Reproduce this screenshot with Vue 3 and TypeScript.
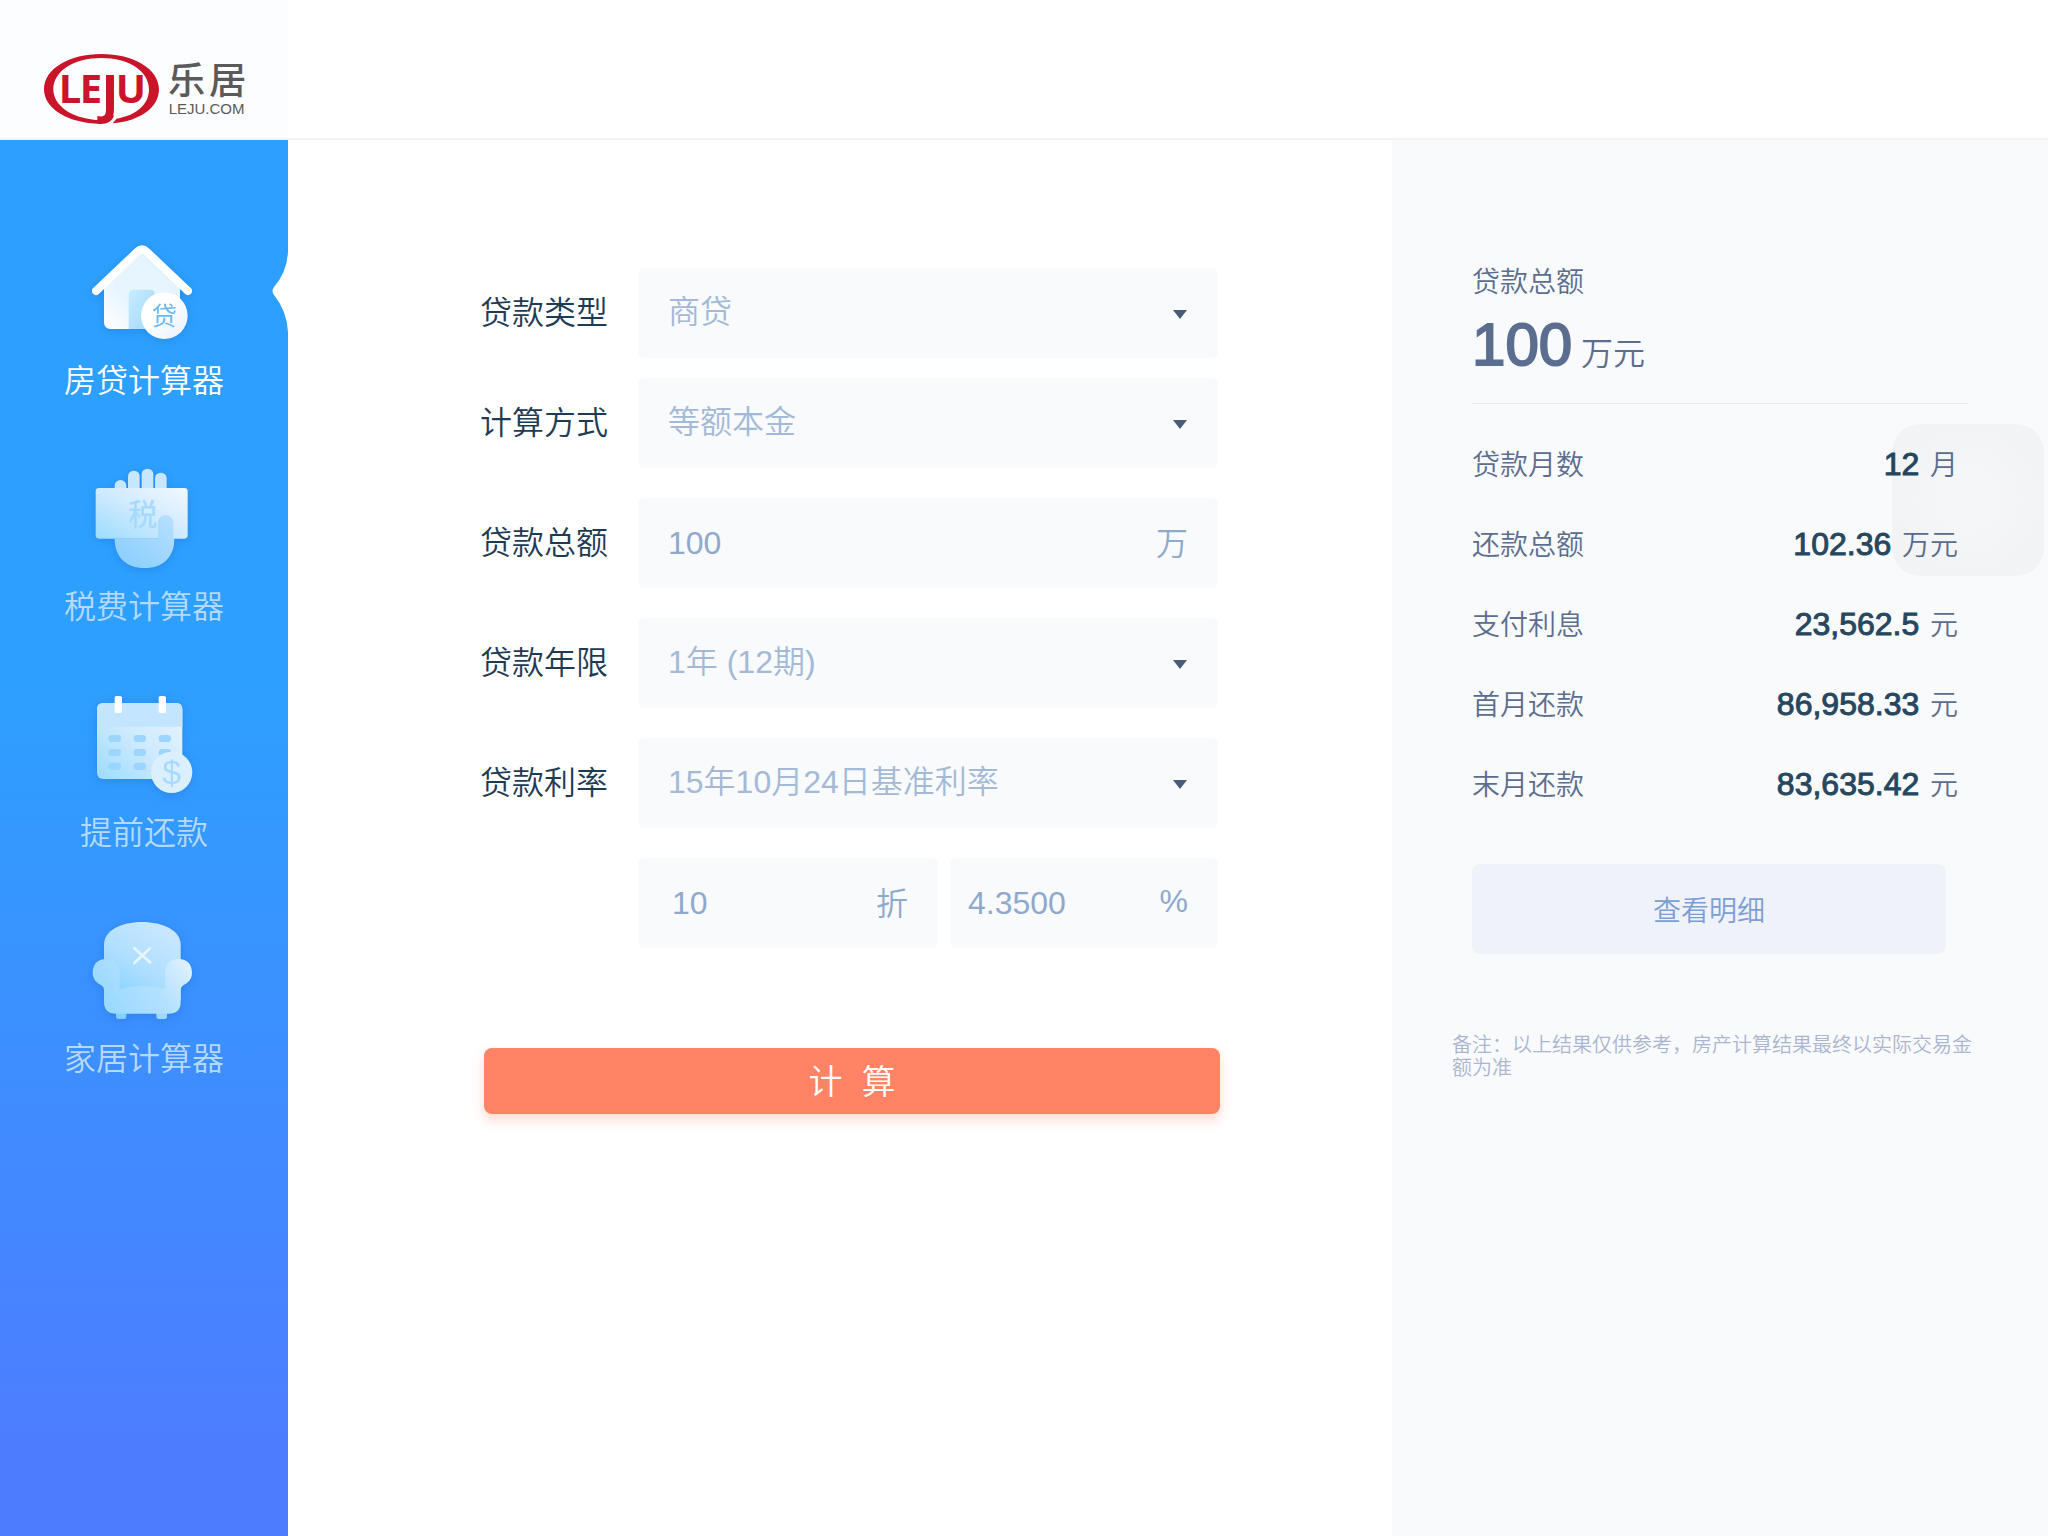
<script setup lang="ts">
import { computed, ref } from 'vue'

interface NavItem {
  id: string
  label: string
}

interface ResultRow {
  label: string
  value: string
  unit: string
}

const navItems: NavItem[] = [
  { id: 'mortgage', label: '房贷计算器' },
  { id: 'tax', label: '税费计算器' },
  { id: 'prepay', label: '提前还款' },
  { id: 'home', label: '家居计算器' },
]
const active = ref('mortgage')

const loanType = ref('商贷')
const method = ref('等额本金')
const total = ref('100')
const years = ref('1年 (12期)')
const baseRate = ref('15年10月24日基准利率')
const discount = ref('10')
const rate = ref('4.3500')

const results = ref<ResultRow[]>([
  { label: '贷款月数', value: '12', unit: '月' },
  { label: '还款总额', value: '102.36', unit: '万元' },
  { label: '支付利息', value: '23,562.5', unit: '元' },
  { label: '首月还款', value: '86,958.33', unit: '元' },
  { label: '末月还款', value: '83,635.42', unit: '元' },
])

const format = (n: number): string =>
  n.toLocaleString('en-US', { maximumFractionDigits: 2 })

const monthlyRate = computed(() => (Number(rate.value) / 1200) * (Number(discount.value) / 10))

function calculate(): void {
  const months = 12
  const principal = Number(total.value) * 10000
  const part = principal / months
  const interest = (principal * monthlyRate.value * (months + 1)) / 2
  const values = [
    String(months),
    format((principal + interest) / 10000),
    format(interest),
    format(part + principal * monthlyRate.value),
    format(part + part * monthlyRate.value),
  ]
  results.value = results.value.map((row, i) => ({ ...row, value: values[i] }))
}
</script>

<template>
  <div class="page">
    <header class="header">
      <a class="brand" href="#" aria-label="乐居">
        <svg class="logo" viewBox="126 66 612 222" aria-hidden="true">
          <path
            fill="#c91429"
            fill-rule="evenodd"
            d="M304 72C400 72 477 116 477 178C477 232 420 274 338 280L350 266C408 257 447 224 447 178C447 123 386 84 304 84C222 84 160 123 160 178C160 226 212 263 286 270C302 271 312 270 318 264L342 256C338 274 320 283 300 282C204 279 132 237 132 178C132 116 208 72 304 72Z"
          />
          <text class="logo-mark" x="176 239" y="220">LE<tspan class="logo-tall" x="304" y="247">J</tspan><tspan x="347" y="220">U</tspan></text>
          <text class="logo-cn" x="504 627" y="192">乐居</text>
          <text class="logo-en" x="506" y="252">LEJU.COM</text>
        </svg>
      </a>
    </header>

    <div class="body">
      <nav class="sidebar">
        <svg class="defs" aria-hidden="true">
          <defs>
            <linearGradient id="wall" x1="0" y1="1" x2="1" y2="0">
              <stop offset="0" stop-color="#fff" />
              <stop offset=".35" stop-color="#e8f5ff" />
              <stop offset=".7" stop-color="#e6f5ff" />
              <stop offset="1" stop-color="#d4ecff" />
            </linearGradient>
            <linearGradient id="door" x1="0" y1="0" x2="1" y2="1">
              <stop offset="0" stop-color="#c9ecff" />
              <stop offset="1" stop-color="#9fd8ff" />
            </linearGradient>
            <linearGradient id="coin" x1="0" y1="0" x2="1" y2="1">
              <stop offset=".4" stop-color="#fff" />
              <stop offset="1" stop-color="#e3f1ff" />
            </linearGradient>
            <linearGradient id="note" x1="0" y1="1" x2="1" y2="0">
              <stop offset="0" stop-color="#9adcff" />
              <stop offset=".5" stop-color="#cfeaff" />
              <stop offset="1" stop-color="#f2f8ff" />
            </linearGradient>
            <linearGradient id="palm" x1="0" y1="1" x2="1" y2="0">
              <stop offset="0" stop-color="#86ccff" />
              <stop offset="1" stop-color="#b8e0ff" />
            </linearGradient>
            <linearGradient id="sheet" x1="0" y1="1" x2="1" y2="0">
              <stop offset="0" stop-color="#9bdcff" />
              <stop offset=".5" stop-color="#cfeaff" />
              <stop offset="1" stop-color="#eaf5ff" />
            </linearGradient>
            <linearGradient id="chair" x1="0" y1="1" x2=".6" y2="0">
              <stop offset="0" stop-color="#79d0ff" />
              <stop offset=".5" stop-color="#addeff" />
              <stop offset="1" stop-color="#c8e7ff" />
            </linearGradient>
            <linearGradient id="arms" x1="0" y1=".4" x2="1" y2="0">
              <stop offset="0" stop-color="#9bdaff" />
              <stop offset=".5" stop-color="#b4e0ff" />
              <stop offset="1" stop-color="#e4f3ff" />
            </linearGradient>
          </defs>
        </svg>
        <ul class="nav-list">
          <li v-for="item in navItems" :key="item.id" class="nav-item">
            <button
              type="button"
              class="nav-button"
              :class="{ active: item.id === active }"
              @click="active = item.id"
            >
              <svg v-if="item.id === 'mortgage'" class="icon" viewBox="102 36 360 360" aria-hidden="true">
                <path fill="url(#wall)" d="M276 96L390 200V327H182Q162 327 162 307V200Z" />
                <path fill="url(#door)" d="M236 327V224Q236 209 251 209H299Q314 209 314 224V327Z" />
                <path
                  fill="none"
                  stroke="#fff"
                  stroke-width="24"
                  stroke-linecap="round"
                  stroke-linejoin="round"
                  d="M138 213L262 95Q276 82 290 95L414 213"
                />
                <circle cx="343" cy="287" r="70" fill="url(#coin)" />
                <text x="343" y="316" font-size="76" fill="#6db9f5" text-anchor="middle" class="glyph">贷</text>
              </svg>
              <svg v-else-if="item.id === 'tax'" class="icon" viewBox="102 24 360 360" aria-hidden="true">
                <g fill="#c7e6ff">
                  <rect x="194" y="90" width="35" height="60" rx="17" />
                  <rect x="234" y="62" width="35" height="80" rx="17" />
                  <rect x="275" y="56" width="35" height="80" rx="17" />
                  <rect x="315" y="68" width="35" height="80" rx="17" />
                </g>
                <rect x="137" y="114" width="276" height="152" rx="10" fill="url(#note)" />
                <text x="279" y="226" font-size="88" fill="#a5dbff" text-anchor="middle" class="glyph strong">税</text>
                <path
                  fill="url(#palm)"
                  d="M194 266H324V218A23 23 0 0 1 370 218V266H373C373 320 340 354 284 354S194 320 194 266Z"
                />
              </svg>
              <svg v-else-if="item.id === 'prepay'" class="icon" viewBox="102 12 360 360" aria-hidden="true">
                <rect x="141" y="69" width="256" height="228" rx="18" fill="url(#sheet)" />
                <path fill="#c3e5ff" d="M141 140V87Q141 69 159 69H379Q397 69 397 87V140Z" />
                <rect x="194" y="48" width="22" height="51" rx="5" fill="#fff" />
                <rect x="326" y="48" width="22" height="51" rx="5" fill="#fff" />
                <g fill="#9cd6ff">
                  <rect x="175" y="165" width="38" height="21" rx="10" />
                  <rect x="251" y="165" width="37" height="21" rx="10" />
                  <rect x="326" y="165" width="37" height="21" rx="10" />
                  <rect x="175" y="207" width="38" height="21" rx="10" />
                  <rect x="251" y="207" width="37" height="21" rx="10" />
                  <rect x="326" y="207" width="37" height="21" rx="10" />
                  <rect x="175" y="248" width="38" height="22" rx="10" />
                  <rect x="251" y="248" width="37" height="22" rx="10" />
                </g>
                <circle cx="365" cy="277" r="62" fill="#dcefff" />
                <text x="365" y="311" font-size="102" fill="#a5dbff" text-anchor="middle" class="latin">$</text>
              </svg>
              <svg v-else class="icon" viewBox="102 30 360 360" aria-hidden="true">
                <rect x="198" y="330" width="31" height="27" rx="7" fill="#7fd0ff" />
                <rect x="319" y="330" width="32" height="27" rx="7" fill="#9cd8ff" />
                <path fill="url(#chair)" d="M162 134C162 92 212 66 276 66S392 92 392 134V300H162Z" />
                <path
                  fill="url(#arms)"
                  d="M168 177C194 177 209 194 209 218V268Q276 248 345 268V218C345 194 360 177 386 177C412 177 426 194 426 218C426 238 414 248 398 257Q392 261 392 270V305Q392 341 356 341H198Q162 341 162 305V270Q162 261 156 257C140 248 128 238 128 218C128 194 142 177 168 177Z"
                />
                <path stroke="#e8f5ff" stroke-width="8" stroke-linecap="round" d="M253 145L300 187M300 145L253 189" />
              </svg>
              <span class="nav-label">{{ item.label }}</span>
            </button>
            <svg v-if="item.id === active" class="notch" viewBox="0 0 16 80" aria-hidden="true">
              <path fill="#fff" d="M16 0Q15 20 2 35Q-1 39 2 43Q15 59 16 80Z" />
            </svg>
          </li>
        </ul>
      </nav>

      <main class="main">
        <form class="form" @submit.prevent="calculate">
          <div class="row tight">
            <label for="loan-type">贷款类型</label>
            <div class="field">
              <select id="loan-type" v-model="loanType">
                <option>商贷</option>
                <option>公积金贷</option>
              </select>
              <span class="caret"></span>
            </div>
          </div>
          <div class="row">
            <label for="method">计算方式</label>
            <div class="field">
              <select id="method" v-model="method">
                <option>等额本金</option>
                <option>等额本息</option>
              </select>
              <span class="caret"></span>
            </div>
          </div>
          <div class="row">
            <label for="total">贷款总额</label>
            <div class="field">
              <input id="total" v-model="total" type="text" inputmode="decimal" />
              <span class="unit">万</span>
            </div>
          </div>
          <div class="row">
            <label for="years">贷款年限</label>
            <div class="field">
              <select id="years" v-model="years">
                <option>1年 (12期)</option>
              </select>
              <span class="caret"></span>
            </div>
          </div>
          <div class="row">
            <label for="base-rate">贷款利率</label>
            <div class="field">
              <select id="base-rate" v-model="baseRate">
                <option>15年10月24日基准利率</option>
              </select>
              <span class="caret"></span>
            </div>
          </div>
          <div class="row split">
            <div class="field">
              <input v-model="discount" class="discount" type="text" inputmode="decimal" aria-label="折扣" />
              <span class="unit">折</span>
            </div>
            <div class="field">
              <input v-model="rate" class="rate" type="text" inputmode="decimal" aria-label="利率" />
              <span class="unit">%</span>
            </div>
          </div>
          <button type="submit" class="submit">计&nbsp;&nbsp;算</button>
        </form>
      </main>

      <aside class="panel">
        <section class="summary">
          <h2 class="summary-title">贷款总额</h2>
          <p class="amount"><strong>100</strong> <span>万元</span></p>
          <dl class="results">
            <div v-for="row in results" :key="row.label" class="result">
              <dt>{{ row.label }}</dt>
              <dd><strong>{{ row.value }}</strong> {{ row.unit }}</dd>
            </div>
          </dl>
          <button type="button" class="detail">查看明细</button>
        </section>
        <p class="remark">备注：以上结果仅供参考，房产计算结果最终以实际交易金额为准</p>
        <div class="float-pad"></div>
      </aside>
    </div>
  </div>
</template>

<style>
body {
  margin: 0;
}
</style>

<style scoped>
.page {
  display: flex;
  flex-direction: column;
  min-height: 100vh;
  background: #fff;
  font-family: "Liberation Sans", "Noto Sans CJK SC", sans-serif;
  font-weight: 350;
}

.header {
  height: 138px;
  border-bottom: 2px solid #f2f2f2;
}

.brand {
  display: block;
  box-sizing: border-box;
  width: 288px;
  height: 138px;
  padding: 52px 42px 0;
  background: #fcfdff;
}

.logo {
  display: block;
  width: 204px;
  height: 74px;
}

.logo-mark {
  fill: #c91429;
  font-family: "Open Sans", "Noto Sans", sans-serif;
  font-size: 120px;
  font-weight: 700;
}

.logo-tall {
  font-size: 158px;
}

.logo-cn {
  fill: #5a5a5a;
  font-family: "Noto Sans CJK SC", sans-serif;
  font-size: 112px;
  font-weight: 500;
}

.logo-en {
  fill: #5a5a5a;
  font-family: "Liberation Sans", sans-serif;
  font-size: 45px;
  font-weight: 400;
}

.body {
  display: flex;
  flex: 1;
}

.sidebar {
  flex: 0 0 288px;
  background: linear-gradient(180deg, #2da0ff 0%, #2da0ff 38%, #4e7cff 95%, #4e7cff 100%);
}

.defs {
  position: absolute;
  width: 0;
  height: 0;
}

.nav-list {
  display: flex;
  flex-direction: column;
  gap: 48px;
  margin: 0;
  padding: 92px 0 0;
  list-style: none;
}

.nav-item {
  position: relative;
}

.nav-button {
  display: flex;
  flex-direction: column;
  align-items: center;
  width: 100%;
  padding: 0;
  border: 0;
  background: none;
  color: #b5d8ff;
  font: inherit;
  font-size: 32px;
  line-height: 58px;
  cursor: pointer;
}

.nav-button.active {
  color: #fff;
}

.icon {
  width: 120px;
  height: 120px;
  filter: drop-shadow(0 2px 5px rgba(20, 90, 190, 0.3));
}

.glyph {
  font-family: "Noto Sans CJK SC", sans-serif;
  font-weight: 400;
}

.glyph.strong {
  font-weight: 500;
}

.latin {
  font-family: "Liberation Sans", sans-serif;
  font-weight: 400;
}

.notch {
  position: absolute;
  top: 20px;
  right: 0;
  width: 16px;
  height: 80px;
}

.main {
  flex: 1;
  padding: 128px 172px 128px 192px;
}

.row {
  display: flex;
  align-items: center;
  margin: 0 2px 30px 0;
}

.row.tight {
  margin-bottom: 20px;
}

.row label {
  flex: 0 0 158px;
  color: #1f3b54;
  font-size: 32px;
  line-height: 48px;
}

.field {
  position: relative;
  display: flex;
  flex: 1;
  align-items: center;
  height: 90px;
  border-radius: 6px;
  background: #f9fafc;
}

.field select,
.field input {
  box-sizing: border-box;
  width: 100%;
  height: 100%;
  padding: 0 30px;
  border: 0;
  outline: 0;
  background: none;
  color: #8fa9cc;
  font: inherit;
  font-size: 32px;
  appearance: none;
}

.field select {
  padding-bottom: 2px;
  color: #a3b9d6;
}

.caret {
  position: absolute;
  right: 31px;
  margin-top: 2px;
  border: 7px solid transparent;
  border-top: 9px solid #4a5b7a;
  border-bottom: 0;
  pointer-events: none;
}

.unit {
  position: absolute;
  right: 30px;
  padding-bottom: 4px;
  color: #8fa9cc;
  font-size: 32px;
}

.split {
  display: grid;
  grid-template-columns: 300fr 268fr;
  gap: 12px;
  margin-bottom: 100px;
  padding-left: 158px;
}

.field .discount {
  padding-left: 34px;
}

.field .rate {
  padding-left: 18px;
}

.submit {
  display: block;
  width: calc(100% - 4px);
  height: 66px;
  margin-left: 4px;
  padding: 0 0 4px;
  border: 0;
  border-radius: 8px;
  background: #ff8364;
  box-shadow: 0 6px 12px rgba(255, 131, 100, 0.3);
  color: #fff;
  font: inherit;
  font-size: 34px;
  cursor: pointer;
}

.panel {
  position: relative;
  box-sizing: border-box;
  flex: 0 0 32.03%;
  padding: 123px 60px 0;
  background: #f9fafc;
  color: #5b6e8f;
}

.summary {
  margin: 0 20px;
}

.summary-title {
  margin: 0;
  font-size: 28px;
  font-weight: inherit;
  line-height: 40px;
}

.amount {
  margin: 0;
  padding: 6px 0 22px;
  border-bottom: 1px solid #e6e9ee;
  font-size: 32px;
  line-height: 48px;
}

.amount strong {
  font-size: 60px;
  font-weight: 400;
  line-height: 72px;
  -webkit-text-stroke: 2px currentColor;
}

.results {
  margin: 22px 10px 38px 0;
}

.result {
  display: flex;
  justify-content: space-between;
  font-size: 28px;
  line-height: 80px;
}

.result dd {
  margin: 0;
}

.result strong {
  margin-right: 3px;
  color: #27475f;
  font-size: 32px;
  font-weight: 400;
  line-height: 40px;
  -webkit-text-stroke: 1px currentColor;
}

.detail {
  display: block;
  width: calc(100% - 22px);
  height: 90px;
  border: 0;
  border-radius: 8px;
  background: #eff2f8;
  color: #7b9fd2;
  font: inherit;
  font-size: 28px;
  cursor: pointer;
}

.remark {
  margin: 80px 0 0;
  color: #a9b6d0;
  font-size: 20px;
  line-height: 23px;
}

.float-pad {
  position: absolute;
  top: 284px;
  right: 4px;
  width: 152px;
  height: 152px;
  border-radius: 28px;
  background: radial-gradient(circle, rgba(0, 0, 0, 0.016) 20%, rgba(0, 0, 0, 0.028) 70%);
  pointer-events: none;
}
</style>
